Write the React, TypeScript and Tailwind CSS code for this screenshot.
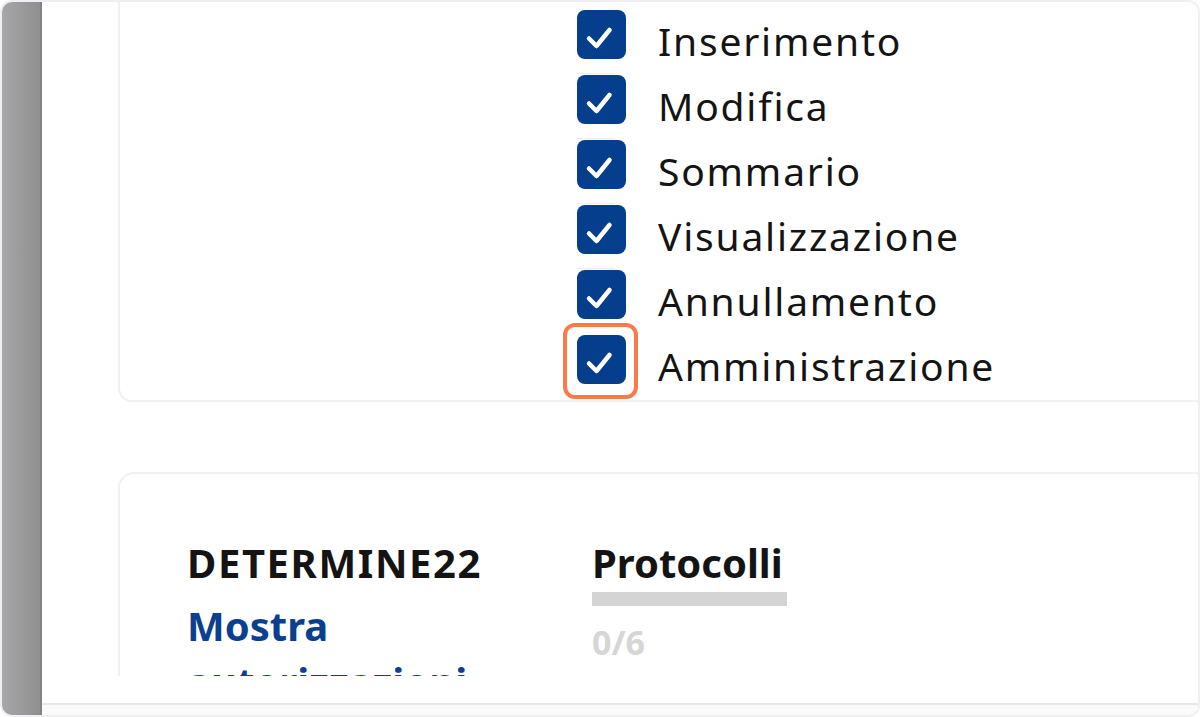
import React from "react";

const items = [
  "Inserimento",
  "Modifica",
  "Sommario",
  "Visualizzazione",
  "Annullamento",
  "Amministrazione",
];

function Check() {
  return (
    <svg width="48" height="48" viewBox="0 0 48 48" className="block">
      <path
        d="M11 27.5 L18.5 35 L31.5 19"
        fill="none"
        stroke="#ffffff"
        strokeWidth="4.5"
        strokeLinecap="round"
        strokeLinejoin="round"
      />
    </svg>
  );
}

export default function App() {
  return (
    <div
      className="w-[1200px] h-[717px] bg-white"
      style={{ fontFamily: '"Noto Sans", "Open Sans", sans-serif' }}
    >
      <div className="w-full h-full border-2 border-[#f0f0f4] rounded-[12px] overflow-hidden flex">
        <div className="w-[40px] h-full shrink-0 bg-linear-to-r from-[#a7a7a9] to-[#8f8f90] border-r-2 border-[#838384]" />
        <div className="flex-1 flex flex-col bg-white min-w-0">
          <div className="h-[674px] overflow-hidden pl-[76px]">
            {/* Card 1 */}
            <div className="w-[1100px] border-2 border-t-0 border-[#f1f1f3] rounded-b-[14px] pl-[457px] pt-2 pb-4">
              <div className="flex flex-col gap-4">
                {items.map((label, i) => (
                  <div key={label} className="flex items-start h-[49px]">
                    <div className="relative w-[49px] h-[49px] shrink-0">
                      {i > 0 && i < 5 && (
                        <div className="absolute -top-[2px] left-0 w-[38px] h-px bg-[#ececee]" />
                      )}
                      <div className="w-[49px] h-[49px] rounded-[8px] bg-[#043e8d] flex items-center justify-center">
                        <Check />
                      </div>
                      {i === 5 && (
                        <div className="absolute -left-[14px] -top-[12px] w-[75px] h-[76px] border-4 border-[#fa7b47] rounded-[12px]" />
                      )}
                    </div>
                    <div className="ml-[32px] mt-[6px] text-[39px] tracking-[1.8px] leading-[49px] text-[#141414] whitespace-nowrap">
                      {label}
                    </div>
                  </div>
                ))}
              </div>
            </div>

            {/* Card 2 */}
            <div className="w-[1100px] mt-[70px] border-2 border-[#f1f1f3] rounded-[16px] pl-[67px] pt-[65px] pb-10 flex">
              <div className="w-[405px] shrink-0 font-bold">
                <div className="text-[40px] leading-[48px] tracking-[1.6px] text-[#141414]">DETERMINE22</div>
                <div className="mt-[15px] w-[360px] text-[40px] text-[#0b3f8f]">
                  <div className="leading-[48px]">Mostra</div>
                  <div className="leading-[48px] mt-[8px]">autorizzazioni&nbsp;›</div>
                </div>
              </div>
              <div className="flex flex-col items-start font-bold">
                <div className="text-[40px] leading-[48px] text-[#141414]">Protocolli</div>
                <div className="mt-[5px] w-[195px] h-[14px] bg-[#d4d4d4]" />
                <div className="mt-[14px] text-[34px] leading-[44px] text-[#d6d6d6]">0/6</div>
              </div>
            </div>
          </div>
          <div className="h-[27px] bg-white" />
          <div className="h-[2px] bg-[#e6e6e8]" />
          <div className="flex-1 bg-[#fafafb]" />
        </div>
      </div>
    </div>
  );
}
